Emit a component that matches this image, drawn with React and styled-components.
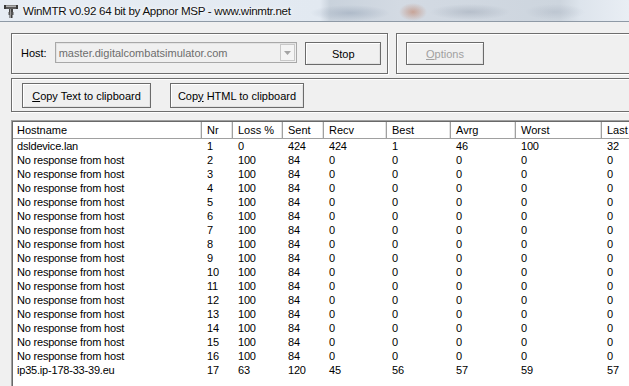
import React from 'react';
import styled, { createGlobalStyle } from 'styled-components';

const Global = createGlobalStyle`
  html, body { margin: 0; padding: 0; background: #f0f0f0; overflow: hidden; }
  body { width: 629px; height: 386px; }
`;

const Window = styled.div`
  width: 700px;
  height: 386px;
  display: flex;
  flex-direction: column;
  background: #f0f0f0;
  font-family: "Liberation Sans", Arial, sans-serif;
  font-size: 11px;
  color: #000;
`;

const TitleBar = styled.div`
  flex: none;
  height: 21px;
  display: flex;
  align-items: center;
  gap: 4px;
  padding-left: 3px;
  border-bottom: 1px solid #8f9aa6;
  background:
    radial-gradient(ellipse 14px 9px at 413px 12px, rgba(190,120,90,0.55), transparent),
    radial-gradient(ellipse 40px 8px at 350px 13px, rgba(140,155,175,0.45), transparent),
    radial-gradient(ellipse 40px 8px at 470px 12px, rgba(150,160,175,0.45), transparent),
    radial-gradient(ellipse 30px 8px at 555px 12px, rgba(160,170,185,0.35), transparent),
    linear-gradient(90deg, #e7edf4 0px, #e2e9f1 320px, #c9d2dc 330px, #d3dae3 400px, #cdd5de 560px, #dde4ec 580px, #e9eef4 629px);
`;

const TitleText = styled.span`
  font-family: "Liberation Sans", Arial, sans-serif;
  font-size: 11.6px;
  color: #101010;
  letter-spacing: -0.3px;
  text-shadow: 0 0 6px #fff, 0 0 3px #fff;
`;

const Client = styled.div`
  flex: 1;
  display: flex;
  flex-direction: column;
  padding: 11px 0 0 11px;
`;

const TopRow = styled.div`
  display: flex;
  gap: 8px;
  height: 41px;
`;

const GroupBox = styled.div`
  box-sizing: border-box;
  display: flex;
  align-items: flex-start;
  gap: ${p => p.$gap || '8px'};
  width: ${p => p.$w};
  flex: ${p => (p.$grow ? 1 : 'none')};
  height: ${p => p.$h};
  margin-top: ${p => p.$mt || '0px'};
  padding: ${p => p.$pad};
  border: 1px solid #6e6e6e;
  box-shadow: inset 1px 1px 0 #fff, 1px 1px 0 #fff;
`;

const Label = styled.span`
  margin-top: 5px;
  margin-left: 1px;
`;

const Combo = styled.div`
  box-sizing: border-box;
  width: 244px;
  height: 21px;
  display: flex;
  align-items: center;
  justify-content: space-between;
  padding: 0 1px 0 3px;
  border: 1px solid #a8a8a8;
  box-shadow: inset 1px 1px 0 #e3e3e3;
  background: #f0f0f0;
  color: #6d6d6d;
`;

const ComboArrow = styled.div`
  box-sizing: border-box;
  width: 15px;
  height: 17px;
  display: flex;
  align-items: center;
  justify-content: center;
  border: 1px solid #c8c8c8;
  background: #f4f4f4;
`;

const Button = styled.div`
  box-sizing: border-box;
  width: ${p => p.$w};
  height: ${p => p.$h || '23px'};
  display: flex;
  align-items: center;
  justify-content: center;
  border: 1px solid #6b6b6b;
  background: #f0f0f0;
  box-shadow: inset 1px 1px 0 #fff, inset -1px -1px 0 #e2e2e2;
  color: ${p => (p.$disabled ? '#a0a0a0' : '#000')};
  white-space: pre;
`;

const Key = styled.span`
  text-decoration: underline;
`;

const List = styled.div`
  box-sizing: border-box;
  margin-top: 8px;
  flex: 1;
  background: #fff;
  border-top: 1px solid #a0a0a0;
  border-left: 1px solid #a0a0a0;
  box-shadow: inset 1px 1px 0 #696969;
  padding-top: 1px;
  padding-left: 1px;
`;

const COLS = '189px 31px 50px 41px 63px 64px 65px 86px 80px';

const HeaderRow = styled.div`
  box-sizing: border-box;
  display: grid;
  grid-template-columns: ${COLS};
  height: 17px;
  background: #fff;
  border-bottom: 1px solid #a0a0a0;
`;

const HeaderCell = styled.div`
  box-sizing: border-box;
  padding-left: ${p => (p.$first ? '4px' : '5px')};
  line-height: 16px;
  border-right: 1px solid #a0a0a0;
  box-shadow: inset 1px 0 0 #fff, inset -1px 0 0 #e3e3e3;
  white-space: nowrap;
`;

const Row = styled.div`
  display: grid;
  grid-template-columns: ${COLS};
  height: 14px;
  line-height: 14px;
`;

const Cell = styled.div`
  padding-left: ${p => (p.$first ? '4px' : '5px')};
  letter-spacing: -0.2px;
  white-space: nowrap;
  overflow: hidden;
`;

const AppIcon = () => (
  <svg width="16" height="16" viewBox="0 0 16 16">
    <rect x="1" y="2" width="14" height="4" fill="#5a5a5a" />
    <rect x="1" y="2.6" width="14" height="1.2" fill="#c8c8c8" />
    <rect x="1" y="2" width="2" height="4" fill="#3a3a3a" />
    <rect x="13" y="2" width="2" height="4" fill="#3a3a3a" />
    <rect x="6" y="6" width="4" height="4" fill="#444" />
    <rect x="5.5" y="9" width="5" height="3" fill="#555" />
    <rect x="6.5" y="12" width="3" height="3" fill="#3c3c3c" />
    <rect x="7" y="6" width="1" height="9" fill="#999" />
  </svg>
);

const header = ['Hostname', 'Nr', 'Loss %', 'Sent', 'Recv', 'Best', 'Avrg', 'Worst', 'Last'];

const rows = [
  ['dsldevice.lan', '1', '0', '424', '424', '1', '46', '100', '32'],
  ...Array.from({ length: 15 }, (_, i) => ['No response from host', String(i + 2), '100', '84', '0', '0', '0', '0', '0']),
  ['ip35.ip-178-33-39.eu', '17', '63', '120', '45', '56', '57', '59', '57'],
];

export default function App() {
  return (
    <>
      <Global />
      <Window>
        <TitleBar>
          <AppIcon />
          <TitleText>WinMTR v0.92 64 bit by Appnor MSP - www.winmtr.net</TitleText>
        </TitleBar>
        <Client>
          <TopRow>
            <GroupBox $w="377px" $h="41px" $pad="8px 6px 0 8px">
              <Label>Host:</Label>
              <Combo>
                <span>master.digitalcombatsimulator.com</span>
                <ComboArrow>
                  <svg width="7" height="4" viewBox="0 0 7 4">
                    <path d="M0 0 H7 L3.5 4 Z" fill="#a4a4a4" />
                  </svg>
                </ComboArrow>
              </Combo>
              <Button $w="76px"><span>Stop</span></Button>
            </GroupBox>
            <GroupBox $grow $h="41px" $pad="8px 0 0 9px">
              <Button $w="78px" $disabled><span><Key>O</Key>ptions</span></Button>
            </GroupBox>
          </TopRow>
          <GroupBox $h="34px" $mt="4px" $pad="4px 0 0 10px" $gap="19px">
            <Button $w="129px" $h="25px"><span><Key>C</Key>opy Text to clipboard</span></Button>
            <Button $w="134px" $h="25px"><span>Cop<Key>y</Key>{' HTML to clipboard'}</span></Button>
          </GroupBox>
          <List>
            <HeaderRow>
              {header.map((h, i) => (
                <HeaderCell key={h} $first={i === 0}>{h}</HeaderCell>
              ))}
            </HeaderRow>
            {rows.map((r, ri) => (
              <Row key={ri}>
                {r.map((c, ci) => (
                  <Cell key={ci} $first={ci === 0}>{c}</Cell>
                ))}
              </Row>
            ))}
          </List>
        </Client>
      </Window>
    </>
  );
}
